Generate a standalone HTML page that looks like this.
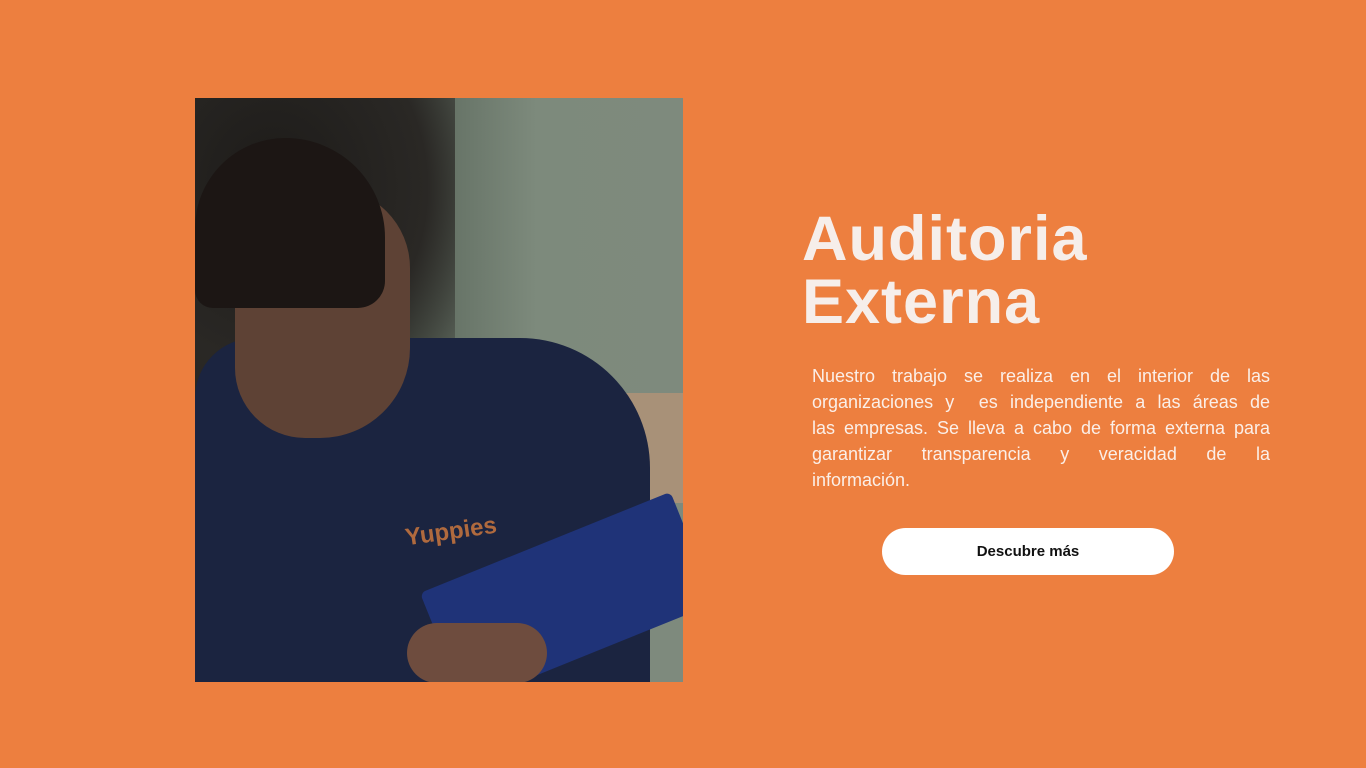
<!DOCTYPE html>
<html><head><meta charset="utf-8"><style>
html,body{margin:0;padding:0}
body{width:1366px;height:768px;background:#ED7F3F;position:relative;overflow:hidden;font-family:"Liberation Sans",sans-serif}
.photo{position:absolute;left:195px;top:98px;width:488px;height:584px;overflow:hidden;
background:linear-gradient(90deg,#26231f 0%,#3a3833 25%,#5d6a5e 45%,#7d8a7c 70%,#7e8a7d 100%);}
.photo div{position:absolute}
h1{position:absolute;left:802px;top:208px;margin:0;font-size:63px;line-height:63px;font-weight:bold;color:#F6EEEA;letter-spacing:1px}
.p{position:absolute;left:812px;top:363px;width:458px;margin:0;font-size:18px;line-height:26px;color:#FBEFE8}
.p span{display:block;text-align:justify;text-align-last:justify;white-space:nowrap}
.p span.l{text-align-last:left}
.btn{position:absolute;left:882px;top:528px;width:292px;height:47px;border-radius:24px;background:#fff;color:#111;font-weight:bold;font-size:15px;text-align:center;line-height:47px}
</style></head><body>
<div class="photo">
  <div style="left:0;top:0;width:260px;height:300px;background:radial-gradient(ellipse at 30% 30%,#1d1b19 0%,#2a2825 60%,rgba(42,40,37,0) 100%)"></div>
  <div style="left:405px;top:295px;width:83px;height:110px;background:#a89178;border-radius:20px 0 0 0"></div>
  <div style="left:0;top:240px;width:455px;height:344px;background:#1b2440;border-radius:60px 130px 0 0"></div>
  <div style="left:40px;top:90px;width:175px;height:250px;background:#5e4235;border-radius:80px 80px 90px 70px"></div>
  <div style="left:0;top:40px;width:190px;height:170px;background:#1c1614;border-radius:100px 110px 30px 20px"></div>
  <div style="left:225px;top:495px;width:270px;height:120px;background:#1f3378;transform:rotate(-22deg);transform-origin:left top;border-radius:6px"></div>
  <div style="left:212px;top:525px;width:140px;height:60px;background:#6e4c3e;border-radius:40px"></div>
  <div style="left:210px;top:420px;color:#b06a3e;font-size:24px;font-weight:bold;transform:rotate(-8deg)">Yuppies</div>
</div>
<h1>Auditoria<br>Externa</h1>
<div class="p">
<span>Nuestro trabajo se realiza en el interior de las</span>
<span>organizaciones y&nbsp; es independiente a las áreas de</span>
<span>las empresas. Se lleva a cabo de forma externa para</span>
<span>garantizar transparencia y veracidad de la</span>
<span class="l">información.</span>
</div>
<div class="btn">Descubre más</div>
</body></html>
